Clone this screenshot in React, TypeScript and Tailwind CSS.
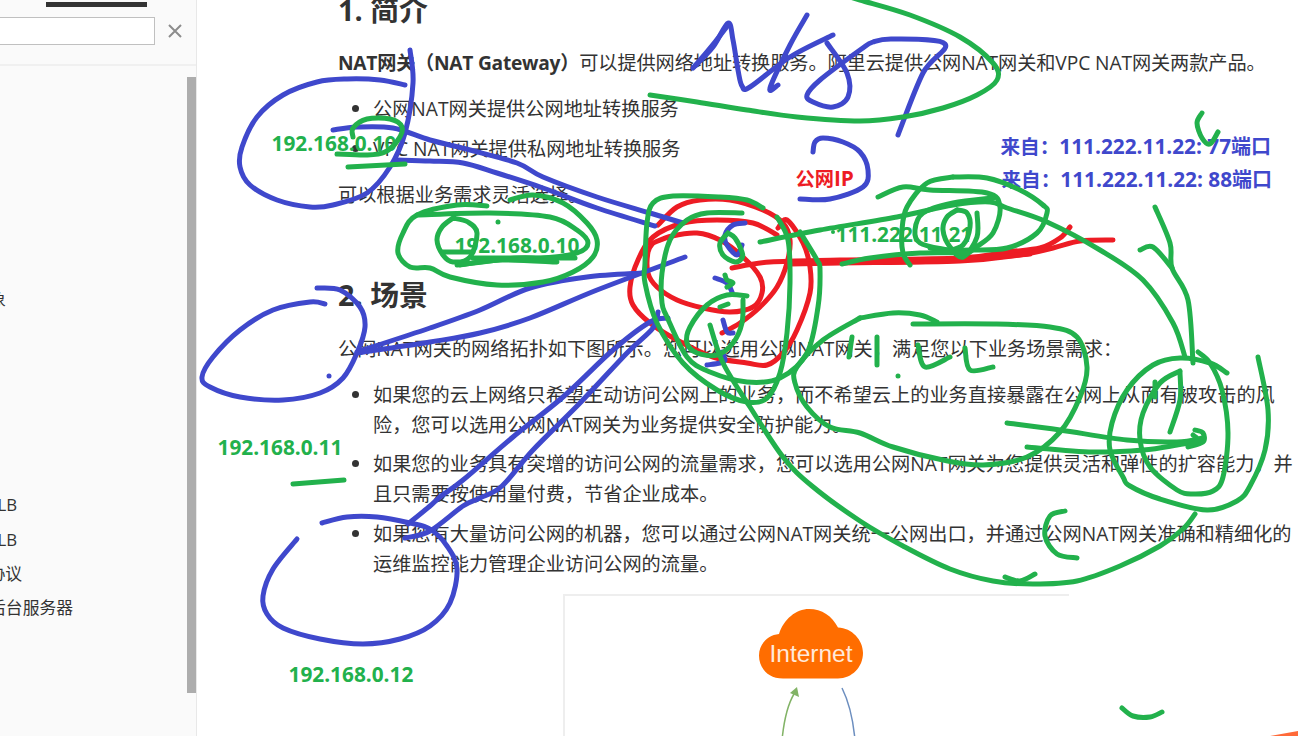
const BLUE = "#3f48cc";
const GREEN = "#22b14c";
const RED = "#ed1c24";

type Pt = [number, number];

// catmull-rom through the hand-drawn points
function smooth(p: Pt[]) {
  let d = `M${p[0][0]} ${p[0][1]}`;
  for (let i = 0; i < p.length - 1; i++) {
    const a = p[i - 1] || p[i];
    const b = p[i];
    const c = p[i + 1];
    const e = p[i + 2] || c;
    d += ` C${b[0] + (c[0] - a[0]) / 6} ${b[1] + (c[1] - a[1]) / 6} ${c[0] - (e[0] - b[0]) / 6} ${c[1] - (e[1] - b[1]) / 6} ${c[0]} ${c[1]}`;
  }
  return d;
}

const redStrokes: Pt[][] = [
  [[658,225],[677,207],[700,200],[730,200],[763,210],[783,223],[790,240],[787,263],[777,287],[760,307],[740,323],[722,333]],
  [[777,235],[753,223],[717,220],[683,223],[653,237],[638,260],[630,287],[633,305],[650,323],[677,340],[713,357],[747,363],[767,365],[783,353],[797,330],[810,293],[810,267],[803,243],[787,220],[778,228]],
  [[653,243],[672,236],[697,233],[720,240],[743,257],[760,277],[762,293],[753,307],[730,312],[703,308],[677,300],[657,287],[648,273],[648,252],[653,243]],
  [[732,268],[770,262],[840,260],[960,258],[1007,252],[1040,248],[1060,238],[1070,227]],
  [[790,264],[840,263],[960,261],[1020,255],[1053,248],[1080,241],[1113,240]],
  [[830,262],[900,262],[960,260],[1030,254]],
];

const blueStrokes: Pt[][] = [
  [[410,50],[413,83],[405,133],[390,167],[367,193],[333,205],[310,207],[277,200],[250,185],[240,167],[242,147],[257,117],[283,95],[317,82],[347,79],[380,80],[405,85]],
  [[333,130],[357,127],[393,128],[430,140],[470,150],[517,163],[543,177],[597,197],[650,213],[683,223]],
  [[397,160],[430,161],[463,163],[497,173],[543,188],[597,208],[655,226]],
  [[693,68],[713,47],[728,23],[733,40],[738,70],[742,86],[750,87],[790,57],[833,35]],
  [[695,66],[715,42],[729,24]],
  [[807,15],[790,45],[770,88],[778,85]],
  [[827,43],[847,73],[848,97],[833,107],[813,102],[807,95],[820,80],[860,50],[873,42],[893,39],[945,44],[923,73],[898,135]],
  [[813,152],[815,142],[823,138],[843,142],[860,152],[868,170],[863,187],[830,199],[800,199]],
  [[317,288],[340,290],[360,307],[365,327],[357,353],[343,378],[320,393],[283,400],[240,397],[210,387],[202,377],[213,357],[240,330],[273,310],[310,302],[325,304]],
  [[357,352],[430,328],[480,310],[530,288],[587,277],[643,273]],
  [[357,353],[430,342],[480,333],[530,318],[597,290],[685,257]],
  [[668,318],[650,322],[613,350],[563,397],[513,437],[463,480],[440,497],[430,506],[408,524]],
  [[658,312],[653,328],[627,353],[580,403],[533,450],[502,486],[480,498],[463,506],[430,531],[405,538]],
  [[322,523],[347,517],[377,517],[410,523],[430,529],[447,546],[457,569],[450,603],[430,626],[400,639],[363,644],[320,639],[283,628],[267,614],[263,596],[273,569],[297,539]],
  [[745,223],[733,225],[725,235],[727,245],[737,255],[742,245]],
  [[715,278],[727,283],[732,292]],
  [[723,320],[727,332],[733,333]],
  [[707,365],[720,363],[725,360],[722,352]],
];

const greenStrokes: Pt[][] = [
  [[650,95],[697,102],[747,110],[797,117],[860,121],[903,117],[943,108],[977,95],[997,80],[993,63],[960,37],[910,15],[860,0],[840,-6]],
  [[337,154],[367,155],[385,152],[398,140],[402,127],[390,119],[367,119],[353,128],[353,137]],
  [[348,167],[405,164]],
  [[487,206],[457,205],[417,215],[403,233],[398,253],[410,267],[430,268],[450,277],[497,285],[543,282],[573,272],[593,257],[597,240],[587,223],[563,203],[533,195],[510,200]],
  [[417,215],[490,213],[550,217],[577,230],[588,243],[577,253],[543,258],[517,258],[457,265]],
  [[473,258],[575,258]],
  [[453,218],[442,227],[437,240],[443,255],[453,262],[470,257],[477,233],[468,222],[453,218]],
  [[442,252],[473,252]],
  [[460,265],[500,260],[557,262]],
  [[763,208],[747,200],[720,197],[673,196],[653,203],[647,223],[645,263],[645,283],[657,323],[683,363],[717,390],[747,402],[767,398],[780,373],[787,333],[790,283],[788,240],[777,217]],
  [[742,213],[707,213],[687,220],[670,240],[662,273],[662,303],[667,317],[687,357],[710,372],[747,382],[780,378],[807,353],[818,307],[820,270],[817,260],[800,232]],
  [[728,233],[720,243],[723,255],[735,262],[742,258],[742,252],[735,238],[728,233]],
  [[725,275],[727,280],[733,283],[727,287]],
  [[747,296],[727,295],[707,305],[690,327],[687,343],[697,353],[717,355],[733,343],[742,323],[743,300]],
  [[720,307],[728,304]],
  [[710,325],[723,363],[750,407],[783,457],[812,486],[860,521],[903,546],[950,569],[993,581],[1033,584],[1077,581],[1120,566],[1160,546],[1183,529],[1195,514]],
  [[1005,577],[1020,581],[1035,574]],
  [[852,337],[849,357]],
  [[877,337],[877,365]],
  [[860,318],[823,340],[797,367],[795,383],[807,407],[830,427],[860,433],[893,447],[943,460],[983,465],[1027,457],[1060,432],[1080,397],[1087,367],[1077,337],[1050,327],[993,324],[913,324]],
  [[860,318],[893,313],[920,315],[937,322]],
  [[918,345],[925,367],[950,357]],
  [[965,348],[970,370],[993,367]],
  [[1007,423],[1060,430],[1127,440],[1177,442],[1203,438]],
  [[1027,447],[1093,452],[1143,450],[1177,445],[1203,440]],
  [[1195,430],[1203,433],[1203,442],[1188,447]],
  [[1193,435],[1198,440],[1190,445]],
  [[1227,373],[1210,363],[1180,358],[1153,365],[1127,390],[1112,423],[1110,450],[1123,477],[1130,486],[1160,499],[1207,510],[1237,501],[1250,486],[1265,450],[1268,410],[1258,357]],
  [[1180,371],[1160,383],[1143,413],[1140,440],[1150,467],[1177,490],[1193,494],[1213,491],[1223,477],[1228,433],[1222,390],[1210,363],[1198,352]],
  [[1155,382],[1155,397]],
  [[1180,373],[1180,400],[1170,432]],
  [[760,242],[820,230],[897,217],[953,205],[990,202],[1007,208],[1047,222],[1100,250],[1143,280],[1173,323],[1185,357]],
  [[1155,207],[1170,243],[1172,268],[1188,300],[1193,363]],
  [[1140,250],[1153,247],[1172,268]],
  [[878,197],[903,187],[930,190],[987,193],[1000,207],[993,233],[975,248],[963,257]],
  [[953,177],[927,183],[907,207],[902,230],[903,253],[910,265]],
  [[953,177],[987,178],[1020,190],[1043,205],[1047,213],[1037,233],[1007,248],[970,250],[947,250],[930,248]],
  [[957,210],[947,217],[943,230],[950,247],[963,257],[977,237],[977,213]],
  [[957,210],[967,213],[970,227],[963,245],[947,251]],
  [[993,198],[953,203],[923,213],[915,230],[920,243],[947,250]],
  [[842,264],[870,258],[920,253],[967,253]],
  [[1202,113],[1197,123],[1202,138],[1210,144],[1218,132]],
  [[293,484],[344,480]],
  [[1065,511],[1050,516],[1045,536],[1057,554],[1077,558]],
  [[1122,708],[1133,716],[1150,717],[1162,712]],
];

function Ink() {
  return (
    <svg className="absolute inset-0" width="1298" height="736" viewBox="0 0 1298 736" fill="none" strokeWidth="5" strokeLinecap="round" strokeLinejoin="round">
      <g stroke={RED}>{redStrokes.map((s, i) => <path key={i} d={smooth(s)} />)}</g>
      <g stroke={BLUE}>{blueStrokes.map((s, i) => <path key={i} d={smooth(s)} />)}</g>
      <g stroke={GREEN}>{greenStrokes.map((s, i) => <path key={i} d={smooth(s)} />)}</g>
      <circle cx="329" cy="376" r="2.5" fill={BLUE} />
      <circle cx="498" cy="222" r="2.5" fill={GREEN} />
      <circle cx="898" cy="376" r="2.5" fill={GREEN} />
      <circle cx="833" cy="232" r="2" fill={GREEN} />
      <polygon points="1270,736 1298,731 1298,736" fill="#ff6a39" />
    </svg>
  );
}

function Sidebar() {
  return (
    <aside className="w-[197px] shrink-0 h-full flex flex-col bg-[#fafafa] border-r border-[#e8e8e8] text-[16.8px] text-[#333]">
      <div className="h-[66px] shrink-0 border-b-2 border-[#f0f0f0]">
        <div className="ml-[46px] w-[101px] h-[5px] mt-[2px] bg-[#333]" />
        <div className="flex items-center mt-[10px]">
          <div className="w-[155px] h-[28px] bg-white border border-[#c0c0c0] border-l-0" />
          <svg className="ml-[13px]" width="14" height="14" viewBox="0 0 14 14" stroke="#8c8c8c" strokeWidth="2">
            <path d="M1 1 13 13M13 1 1 13" />
          </svg>
        </div>
      </div>
      <div className="flex-1 flex min-h-0">
        <div className="flex-1 pt-[216.5px] leading-[34.3px] whitespace-nowrap">
          <div className="w-[6px] flex justify-end">对象</div>
          <div className="h-[171.5px]" />
          <div className="w-[17px] flex justify-end">传统型负载均衡CLB</div>
          <div className="w-[17px] flex justify-end">应用型负载均衡ALB</div>
          <div className="w-[22px] flex justify-end">监听协议</div>
          <div className="w-[73px] flex justify-end">添加后台服务器</div>
        </div>
        <div className="w-[9px] mt-[11px] h-[616px] bg-[#adadad]" />
      </div>
    </aside>
  );
}

function Figure() {
  return (
    <div className="ml-[225px] mt-[15px] w-[506px] h-[160px] border-t-2 border-l-2 border-[#eeeeee]">
      <svg width="504" height="158" viewBox="565 596 504 158" fill="none">
        <path d="M783 678.500 C767 678.500 759 667 759 655.500 C759 644 768 635 779 634 C784 619 796 609 809 609 C822 609 832 616 838 627.500 C852 628 863 640 863 653 C863 667 852 678.500 838 678.500 Z" fill="#ff6d00" />
        <text x="811" y="662" textAnchor="middle" fill="#ffe9da" fontSize="24.5" fontFamily="'Liberation Sans', sans-serif">Internet</text>
        <path d="M782 740 C784 720 788 704 794 694" stroke="#82b366" strokeWidth="1.5" />
        <path d="M797 687 L799 697 L790 693 Z" fill="#82b366" />
        <path d="M842 688 C849 702 853 718 855 740" stroke="#6c8ebf" strokeWidth="1.5" />
      </svg>
    </div>
  );
}

export default function App() {
  return (
    <div className="relative flex w-[1298px] h-[736px] overflow-hidden bg-white font-['Open_Sans','Noto_Sans_CJK_SC',sans-serif]">
      <Sidebar />
      <main className="flex-1 pl-[141px] pr-[4px] -mt-[10px] text-[19.2px] leading-[30px] text-[#333]">
        <h2 className="text-[28.8px] leading-[40px] font-bold mb-[18px]">1. 简介</h2>
        <p className="tracking-[-0.09px]"><strong className="font-bold tracking-[-0.25px]">NAT网关（NAT Gateway）</strong>可以提供网络地址转换服务。阿里云提供公网NAT网关和VPC NAT网关两款产品。</p>
        <ul className="list-disc pl-[35px] mt-[16px]">
          <li className="mb-[9.6px]">公网NAT网关提供公网地址转换服务</li>
          <li>VPC NAT网关提供私网地址转换服务</li>
        </ul>
        <p className="mt-[16px]">可以根据业务需求灵活选择。</p>
        <h2 className="text-[28.8px] leading-[40px] font-bold mt-[65px] mb-[19px]">2. 场景</h2>
        <p>公网NAT网关的网络拓扑如下图所示。您可以选用公网NAT网关，满足您以下业务场景需求：</p>
        <ul className="list-disc pl-[35px] mt-[16px]">
          <li className="mb-[9.6px]">如果您的云上网络只希望主动访问公网上的业务，而不希望云上的业务直接暴露在公网上从而有被攻击的风险，您可以选用公网NAT网关为业务提供安全防护能力。</li>
          <li className="mb-[9.6px]">如果您的业务具有突增的访问公网的流量需求，您可以选用公网NAT网关为您提供灵活和弹性的扩容能力，并且只需要按使用量付费，节省企业成本。</li>
          <li>如果您有大量访问公网的机器，您可以通过公网NAT网关统一公网出口，并通过公网NAT网关准确和精细化的运维监控能力管理企业访问公网的流量。</li>
        </ul>
        <Figure />
      </main>
      <div className="absolute inset-0 pointer-events-none text-[20.8px] leading-[28px] font-bold whitespace-nowrap">
        <span className="absolute left-[271.500px] top-[129px] text-[#22b14c]">192.168.0.10</span>
        <span className="absolute left-[454.500px] top-[231px] text-[#22b14c]">192.168.0.10</span>
        <span className="absolute left-[217.500px] top-[433px] text-[#22b14c]">192.168.0.11</span>
        <span className="absolute left-[288.500px] top-[660px] text-[#22b14c]">192.168.0.12</span>
        <span className="absolute left-[835.500px] top-[220px] text-[#22b14c]">111.222.11.21</span>
        <span className="absolute left-[795.500px] top-[164px] text-[#ed1c24]"><span className="text-[19.2px]">公网</span>IP</span>
        <span className="absolute left-[1000.500px] top-[132px] text-[#3f48cc]"><span className="text-[19.6px]">来自：</span>111.222.11.22: 77<span className="text-[20px]">端口</span></span>
        <span className="absolute left-[1001.500px] top-[165px] text-[#3f48cc]"><span className="text-[19.6px]">来自：</span>111.222.11.22: 88<span className="text-[20px]">端口</span></span>
        <Ink />
      </div>
    </div>
  );
}
